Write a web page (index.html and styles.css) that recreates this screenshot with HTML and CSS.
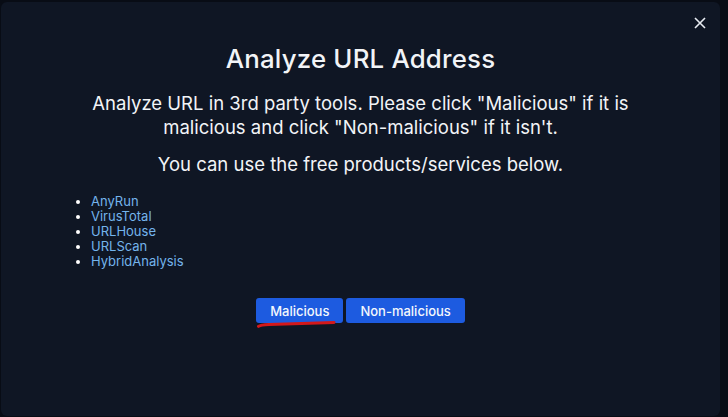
FILE: index.html
```html
<!DOCTYPE html>
<html>
<head>
<meta charset="utf-8">
<link rel="stylesheet" href="styles.css">
</head>
<body>
<div class="modal">
  <button class="close" aria-label="Close">
    <svg width="12" height="12" viewBox="0 0 12 12"><path d="M1 1L11 11M11 1L1 11" stroke="#e8ecf2" stroke-width="1.6" fill="none"/></svg>
  </button>
  <h1 class="title">Analyze URL Address</h1>
  <p class="desc">Analyze URL in 3rd party tools. Please click "Malicious" if it is malicious and click "Non-malicious" if it isn't.</p>
  <p class="desc second">You can use the free products/services below.</p>
  <ul class="tools">
    <li><a>AnyRun</a></li>
    <li><a>VirusTotal</a></li>
    <li><a>URLHouse</a></li>
    <li><a>URLScan</a></li>
    <li><a>HybridAnalysis</a></li>
  </ul>
  <div class="actions">
    <div class="btn-wrap">
      <button class="btn">Malicious</button>
      <svg class="mark" width="80" height="8" viewBox="0 0 80 8"><path d="M1.5 6.3C3 5 6 4.6 12 4.4L77 2.4" stroke="#d3181a" stroke-width="3" fill="none" stroke-linecap="round"/></svg>
    </div>
    <button class="btn">Non-malicious</button>
  </div>
</div>
</body>
</html>
```
FILE: styles.css
```css
html, body {
  margin: 0;
  padding: 0;
  background: #080c15;
  font-family: "Inter", "Noto Sans", sans-serif;
}
.modal {
  position: relative;
  box-sizing: border-box;
  margin: 2px 8px 0 1px;
  height: 414px;
  background: #0f1624;
  border-radius: 6px;
  padding-top: 42px;
  color: #f2f4f7;
}
.close {
  position: absolute;
  top: 15px;
  right: 14px;
  background: none;
  border: 0;
  padding: 0;
  width: 12px;
  height: 12px;
  cursor: pointer;
}
.close svg { display: block; }
.title {
  margin: 0;
  text-align: center;
  font-size: 25.8px;
  font-weight: 500;
  line-height: 30px;
  letter-spacing: 0.2px;
}
.desc {
  margin: 17px auto 0;
  width: 570px;
  text-align: center;
  font-size: 18.5px;
  font-weight: 400;
  line-height: 24px;
}
.desc.second {
  margin-top: 13px;
}
.tools {
  margin: 18px 0 0;
  padding-left: 90px;
  font-size: 13px;
  line-height: 15px;
  color: #fff;
}
.tools li a {
  color: #74b4ec;
}
.actions {
  display: flex;
  justify-content: center;
  gap: 3px;
  margin-top: 29px;
}
.btn-wrap {
  position: relative;
}
.btn {
  display: block;
  background: #1d5be0;
  color: #f4f7fc;
  border: 0;
  border-radius: 3px;
  height: 25px;
  padding: 0 14px;
  font-family: "Inter", "Noto Sans", sans-serif;
  font-size: 13px;
  font-weight: 500;
}
.mark {
  position: absolute;
  left: 1px;
  top: 22px;
}
```
